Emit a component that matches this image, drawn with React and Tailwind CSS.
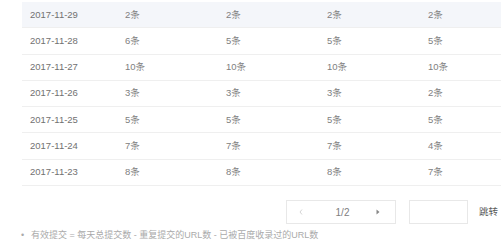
const ROWS = [
  ['2017-11-29', '2条', '2条', '2条', '2条'],
  ['2017-11-28', '6条', '5条', '5条', '5条'],
  ['2017-11-27', '10条', '10条', '10条', '10条'],
  ['2017-11-26', '3条', '3条', '3条', '2条'],
  ['2017-11-25', '5条', '5条', '5条', '5条'],
  ['2017-11-24', '7条', '7条', '7条', '4条'],
  ['2017-11-23', '8条', '8条', '8条', '7条'],
];

export default function App() {
  return (
    <div className="w-[501px] h-[244px] overflow-hidden bg-white font-['Liberation_Sans','Noto_Sans_CJK_SC',sans-serif]">
      <div className="pl-[22px] pt-[2px]">
        {ROWS.map((r, i) => (
          <div
            key={r[0]}
            className={`grid grid-cols-[103px_101px_101px_101px_101px] w-[507px] h-[26.3px] items-center border-b border-[#efefef] text-[9.5px] ${i === 0 ? 'bg-[#f4f6fa]' : ''}`}
          >
            <div className="pl-[8px] text-[#717171]">{r[0]}</div>
            {r.slice(1).map((v, j) => (
              <div key={j} className="text-[#808080]">
                {v}
              </div>
            ))}
          </div>
        ))}
      </div>

      <div className="flex items-center pl-[286px] mt-[14px]">
        <div className="w-[110px] h-[24px] border border-[#e8e8e8] flex items-center justify-between pl-[12px] pr-[15px]">
          <svg width="4" height="6" viewBox="0 0 4 6">
            <path d="M3 0.5 L1 3 L3 5.5" fill="none" stroke="#d4d4d4" strokeWidth="1" />
          </svg>
          <span className="text-[10px] text-[#808080] ml-[6px]">1/2</span>
          <svg width="4" height="6" viewBox="0 0 4 6">
            <path d="M0.5 0.5 L3.5 3 L0.5 5.5 Z" fill="#888" />
          </svg>
        </div>
        <div className="w-[59px] h-[24px] border border-[#e8e8e8] ml-[13px]" />
        <span className="ml-[11px] text-[9.5px] text-[#5a5a5a]">跳转</span>
      </div>

      <div className="flex items-center mt-[5px] pl-[21px] text-[9px] text-[#aaa]">
        <span className="w-[10px]">•</span>
        <span>有效提交 = 每天总提交数 - 重复提交的URL数 - 已被百度收录过的URL数</span>
      </div>
    </div>
  );
}
